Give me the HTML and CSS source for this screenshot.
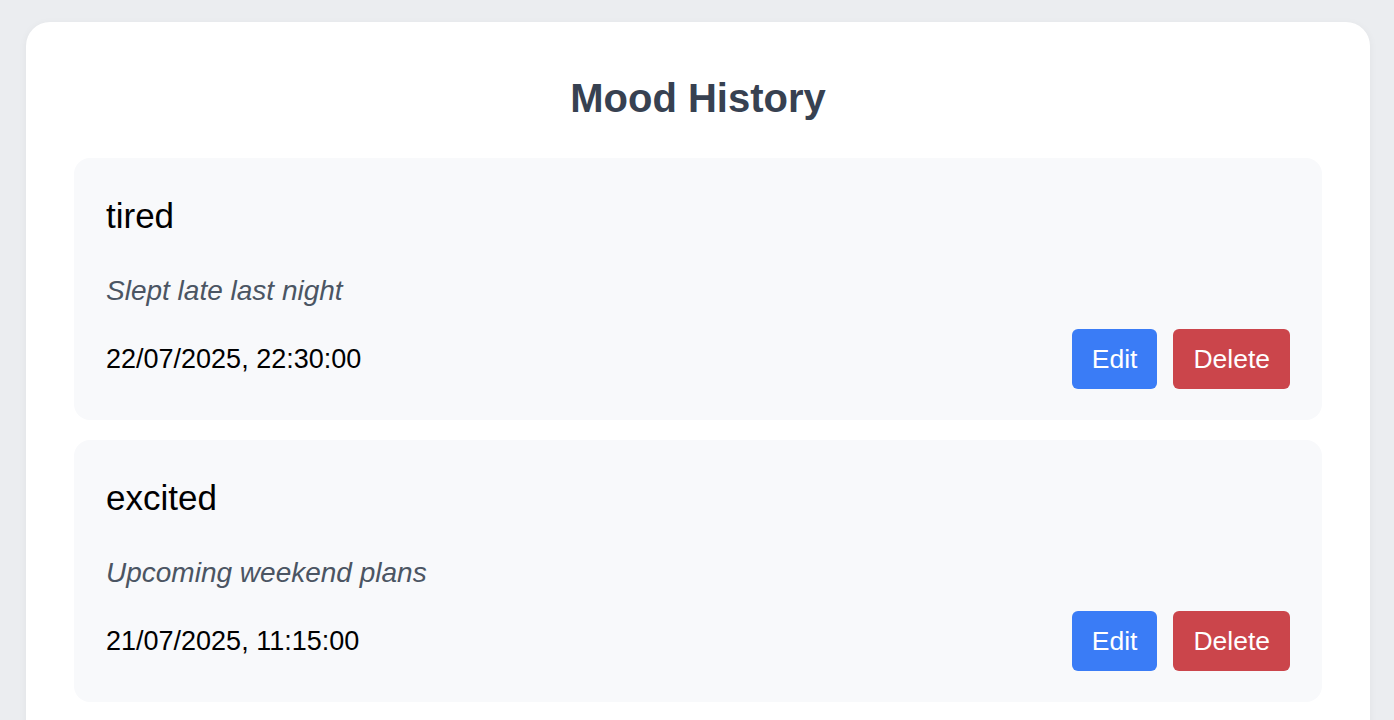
FILE: index.html
```html
<!DOCTYPE html>
<html lang="en">
<head>
<meta charset="utf-8">
<title>Mood History</title>
<link rel="stylesheet" href="styles.css">
</head>
<body>
<main class="panel">
  <h2 class="title">Mood History</h2>
  <div class="list">
    <section class="entry">
      <h3 class="mood">tired</h3>
      <p class="note">Slept late last night</p>
      <div class="row">
        <span class="date">22/07/2025, 22:30:00</span>
        <div class="actions">
          <button class="btn btn-edit">Edit</button>
          <button class="btn btn-delete">Delete</button>
        </div>
      </div>
    </section>
    <section class="entry">
      <h3 class="mood">excited</h3>
      <p class="note">Upcoming weekend plans</p>
      <div class="row">
        <span class="date">21/07/2025, 11:15:00</span>
        <div class="actions">
          <button class="btn btn-edit">Edit</button>
          <button class="btn btn-delete">Delete</button>
        </div>
      </div>
    </section>
  </div>
</main>
</body>
</html>
```
FILE: styles.css
```css
html, body {
  margin: 0;
  padding: 0;
}
body {
  background: #ebedf0;
  font-family: "Liberation Sans", Arial, Helvetica, sans-serif;
  padding: 22px 24px 40px 26px;
}
.panel {
  background: #ffffff;
  border-radius: 24px;
  box-shadow: 0 2px 8px rgba(0, 0, 0, 0.05);
  padding: 48px 48px 48px 48px;
}
.title {
  margin: 0 0 32px;
  font-size: 40px;
  line-height: 56px;
  font-weight: 700;
  text-align: center;
  color: #374151;
}
.list {
  display: flex;
  flex-direction: column;
  gap: 20px;
}
.entry {
  background: #f8f9fb;
  border-radius: 16px;
  padding: 32px 32px 31px;
}
.mood {
  margin: 0 0 28px;
  font-size: 35px;
  line-height: 52px;
  font-weight: 400;
  color: #000;
}
.note {
  margin: 0 0 17px;
  font-size: 28px;
  line-height: 42px;
  font-style: italic;
  color: #4b5563;
}
.row {
  display: flex;
  align-items: center;
  justify-content: space-between;
  height: 60px;
}
.date {
  font-size: 27px;
  color: #000;
}
.actions {
  display: flex;
  gap: 16px;
}
.btn {
  height: 60px;
  padding: 0 20px;
  border: none;
  border-radius: 6px;
  font-family: "Liberation Sans", Arial, Helvetica, sans-serif;
  font-size: 26.5px;
  color: #fff;
}
.btn-edit {
  background: #3a7cf6;
}
.btn-delete {
  background: #cb454b;
}
```
